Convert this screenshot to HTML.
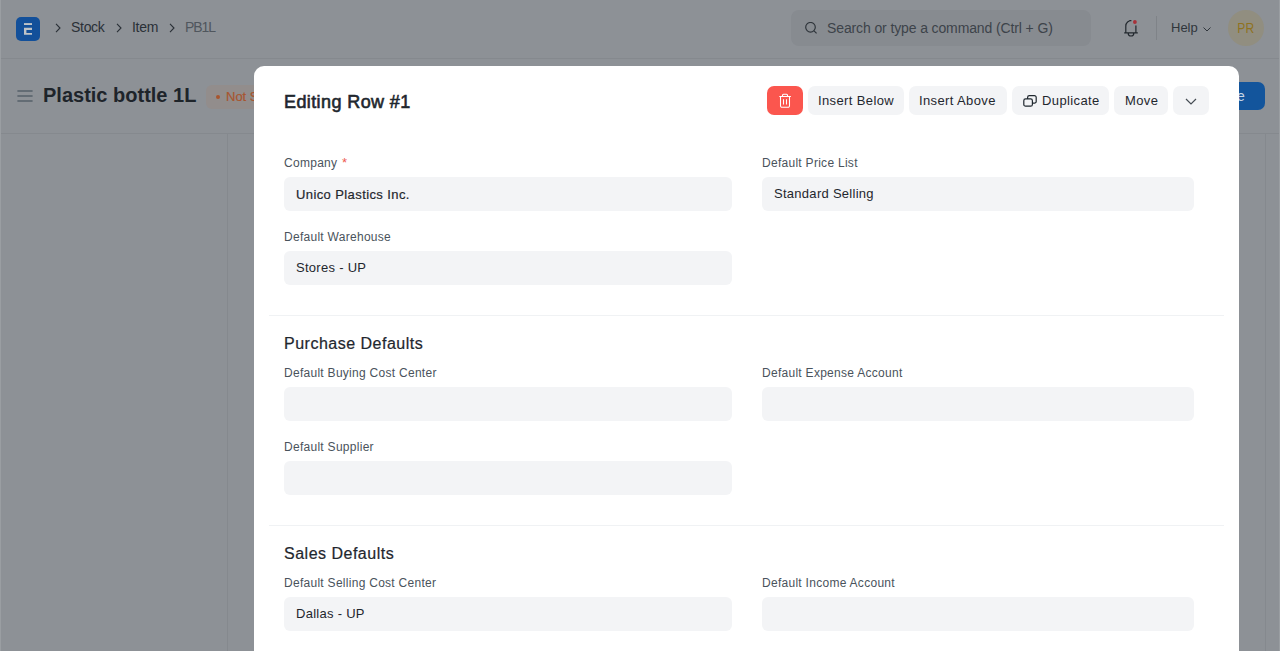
<!DOCTYPE html>
<html>
<head>
<meta charset="utf-8">
<style>
*{box-sizing:border-box;margin:0;padding:0}
html,body{width:1280px;height:651px;overflow:hidden}
body{font-family:"Liberation Sans",sans-serif;background:#8d9196;position:relative;color:#1f272e}
.abs{position:absolute}
/* background page (already blended with overlay) */
#nav{left:0;top:0;width:1280px;height:59px;background:#8d9196;border-bottom:1px solid #85898e}
#head{left:0;top:59px;width:1280px;height:75px;background:#8d9196;border-bottom:1px solid #85898e}
#vl1{left:227px;top:134px;width:1px;height:517px;background:#85898e}
#vl2{left:1265px;top:134px;width:1px;height:517px;background:#85898e}
#edgeL{left:0;top:0;width:1px;height:651px;background:#9a9ea2}
#edgeR{left:1279px;top:0;width:1px;height:651px;background:#9a9ea2}
#logo{left:16px;top:17px;width:24px;height:24px;border-radius:5px;background:#13509a}
.bc{top:18px;font-size:14px;color:#2a3037;line-height:18px;letter-spacing:-0.3px}
.chev{top:24px}
#search{left:791px;top:10px;width:300px;height:36px;border-radius:8px;background:#878b90}
#search .t{left:36px;top:9px;font-size:14px;color:#3d434a;white-space:nowrap;line-height:18px;letter-spacing:-0.12px}
#help{left:1171px;top:20px;font-size:13px;color:#30363c;line-height:16px}
#avatar{left:1228px;top:10px;width:36px;height:36px;border-radius:50%;background:#918e80;color:#8f7220;font-size:14px;text-align:center;line-height:36px}
#avatar span{display:inline-block;transform:scaleX(0.86)}
#title{left:43px;top:83px;font-size:20px;font-weight:700;color:#1e242a;line-height:24px;white-space:nowrap}
#badge{left:206px;top:85px;width:60px;height:24px;border-radius:6px;background:#928d8c}
#badge .t{left:20px;top:4px;font-size:13px;color:#a8552f;-webkit-text-stroke:0.2px #a8552f;white-space:nowrap;line-height:16px}
#badge .d{left:10px;top:10px;width:4px;height:4px;border-radius:50%;background:#a8552f}
#save{left:1200px;top:82px;width:65px;height:28px;border-radius:7px;background:#13559c}
#save .t{left:13px;top:6px;font-size:14px;color:#c8d6e6;line-height:16px}

/* modal */
#modal{left:254px;top:66px;width:985px;height:600px;background:#fff;border-radius:10px}
#mtitle{left:30px;top:25px;font-size:18px;font-weight:400;-webkit-text-stroke:0.6px #1f272e;color:#1f272e;line-height:22px;white-space:nowrap;letter-spacing:0.4px}
.btn{position:absolute;top:20px;height:29px;border-radius:7px;background:#f3f4f6;color:#1f272e;font-size:13px;line-height:29px;white-space:nowrap;letter-spacing:0.38px}
.btn span{position:absolute;top:0}
#bdel{left:513px;width:36px;background:#fb564e}
.sep{position:absolute;left:15px;width:955px;height:1px;background:#f0f2f4}
.lbl{position:absolute;font-size:12px;color:#4a535c;line-height:14px;white-space:nowrap;letter-spacing:0.28px}
.inp{position:absolute;height:34px;border-radius:6px;background:#f3f4f6}
.inp span{position:absolute;left:12px;top:9px;font-size:13px;color:#1f272e;line-height:16px;white-space:nowrap;letter-spacing:0.28px}
.c1{left:30px;width:448px}
.c2{left:508px;width:432px}
.sh{position:absolute;left:30px;font-size:16px;font-weight:400;-webkit-text-stroke:0.22px #1f272e;color:#1f272e;line-height:20px;white-space:nowrap;letter-spacing:0.5px}
</style>
</head>
<body>
<div id="nav" class="abs"></div>
<div id="head" class="abs"></div>
<div id="edgeL" class="abs"></div>
<div id="vl1" class="abs"></div>
<div id="vl2" class="abs"></div>
<div id="edgeR" class="abs"></div>

<div id="logo" class="abs">
 <svg width="24" height="24" viewBox="0 0 24 24" style="position:absolute;left:0;top:0">
  <rect x="8" y="6.1" width="8" height="1.9" fill="#bfc3c7"/>
  <path d="M8 10.8h8v2.3h-5.6v2.9h5.6v1.8H8z" fill="#bfc3c7"/>
 </svg>
</div>
<svg class="abs" style="left:54px;top:22px" width="8" height="12" viewBox="0 0 8 12"><path d="M2 1.8l4 4.2-4 4.2" fill="none" stroke="#2a3037" stroke-width="1.1"/></svg>
<div class="abs bc" style="left:71px">Stock</div>
<svg class="abs" style="left:115px;top:22px" width="8" height="12" viewBox="0 0 8 12"><path d="M2 1.8l4 4.2-4 4.2" fill="none" stroke="#2a3037" stroke-width="1.1"/></svg>
<div class="abs bc" style="left:132px">Item</div>
<svg class="abs" style="left:168px;top:22px" width="8" height="12" viewBox="0 0 8 12"><path d="M2 1.8l4 4.2-4 4.2" fill="none" stroke="#2a3037" stroke-width="1.1"/></svg>
<div class="abs bc" style="left:185px;color:#50565d;letter-spacing:-1.1px">PB1L</div>

<div id="search" class="abs">
 <svg class="abs" style="left:13px;top:12px" width="14" height="14" viewBox="0 0 14 14"><circle cx="6.5" cy="5.3" r="4.8" fill="none" stroke="#2f353b" stroke-width="1.2"/><path d="M10 8.8L12.6 11.4" stroke="#2f353b" stroke-width="1.2"/></svg>
 <div class="abs t">Search or type a command (Ctrl + G)</div>
</div>
<svg class="abs" style="left:1115px;top:12px" width="50" height="32" viewBox="0 0 50 32">
 <path d="M10.8 20.6V14Q10.8 11.6 12.6 10L15 8.6h1.4M20.9 13.4V20.6M9.2 20.9H22.8M13.2 21.2A2.8 2.8 0 0 0 18.8 21.2" fill="none" stroke="#22282e" stroke-width="1.2"/>
 <circle cx="19.9" cy="10" r="1.9" fill="#a8323a"/>
</svg>
<div class="abs" style="left:1156px;top:16px;width:1px;height:24px;background:#7f8388"></div>
<div id="help" class="abs">Help</div>
<svg class="abs" style="left:1202px;top:25px" width="10" height="8" viewBox="0 0 10 8"><path d="M1.5 2.5l3.5 3.5 3.5-3.5" fill="none" stroke="#30363c" stroke-width="1"/></svg>
<div id="avatar" class="abs"><span>PR</span></div>

<svg class="abs" style="left:17px;top:89px" width="16" height="14" viewBox="0 0 16 14"><path d="M0.4 2h15.2M0.4 7h15.2M0.4 12h15.2" stroke="#56606a" stroke-width="1.7"/></svg>
<div id="title" class="abs">Plastic bottle 1L</div>
<div id="badge" class="abs"><div class="abs d"></div><div class="abs t">Not Saved</div></div>
<div id="save" class="abs"><div class="abs t">Save</div></div>

<div id="modal" class="abs">
 <div id="mtitle" class="abs">Editing Row #1</div>
 <div class="btn" id="bdel">
  <svg style="position:absolute;left:12px;top:7px" width="13" height="16" viewBox="0 0 13 16"><path d="M0.3 3.5h11.6M3.5 3.5V2.3a1 1 0 0 1 1-1h3a1 1 0 0 1 1 1v1.2M1.5 3.5v9.3a1.5 1.5 0 0 0 1.5 1.5h6a1.5 1.5 0 0 0 1.5-1.5V3.5M4.5 6.3v5.2M7.5 6.3v5.2" fill="none" stroke="#fff" stroke-width="1.05"/></svg>
 </div>
 <div class="btn" style="left:554px;width:96px"><span style="left:10px">Insert Below</span></div>
 <div class="btn" style="left:655px;width:98px"><span style="left:10px">Insert Above</span></div>
 <div class="btn" style="left:758px;width:97px">
  <svg style="position:absolute;left:10px;top:8px" width="16" height="14" viewBox="0 0 16 14"><rect x="1.8" y="4.9" width="8.6" height="7.3" rx="1.8" fill="none" stroke="#1f272e" stroke-width="1.2"/><path d="M5.6 4.9V3.4a1.8 1.8 0 0 1 1.8-1.8h5a1.8 1.8 0 0 1 1.8 1.8v4a1.8 1.8 0 0 1-1.8 1.8h-2" fill="none" stroke="#1f272e" stroke-width="1.2"/></svg>
  <span style="left:30px">Duplicate</span></div>
 <div class="btn" style="left:860px;width:54px"><span style="left:11px">Move</span></div>
 <div class="btn" style="left:919px;width:36px">
  <svg style="position:absolute;left:11px;top:10.8px" width="14" height="9" viewBox="0 0 14 9"><path d="M2 2l5 5 5-5" fill="none" stroke="#454c53" stroke-width="1.2"/></svg>
 </div>

 <!-- section 1 -->
 <div class="lbl" style="left:30px;top:90px">Company <span style="color:#ee5a52;font-size:13px;margin-left:1px">*</span></div>
 <div class="inp c1" style="top:111px"><span style="-webkit-text-stroke:0.2px #1f272e;top:10px;letter-spacing:0.4px">Unico Plastics Inc.</span></div>
 <div class="lbl" style="left:508px;top:90px">Default Price List</div>
 <div class="inp c2" style="top:111px"><span>Standard Selling</span></div>
 <div class="lbl" style="left:30px;top:164px">Default Warehouse</div>
 <div class="inp c1" style="top:185px"><span>Stores - UP</span></div>

 <div class="sep" style="top:249px"></div>
 <div class="sh" style="top:268px">Purchase Defaults</div>
 <div class="lbl" style="left:30px;top:300px">Default Buying Cost Center</div>
 <div class="inp c1" style="top:321px"></div>
 <div class="lbl" style="left:508px;top:300px">Default Expense Account</div>
 <div class="inp c2" style="top:321px"></div>
 <div class="lbl" style="left:30px;top:374px">Default Supplier</div>
 <div class="inp c1" style="top:395px"></div>

 <div class="sep" style="top:459px"></div>
 <div class="sh" style="top:478px">Sales Defaults</div>
 <div class="lbl" style="left:30px;top:510px">Default Selling Cost Center</div>
 <div class="inp c1" style="top:531px"><span>Dallas - UP</span></div>
 <div class="lbl" style="left:508px;top:510px">Default Income Account</div>
 <div class="inp c2" style="top:531px"></div>
</div>
</body>
</html>
